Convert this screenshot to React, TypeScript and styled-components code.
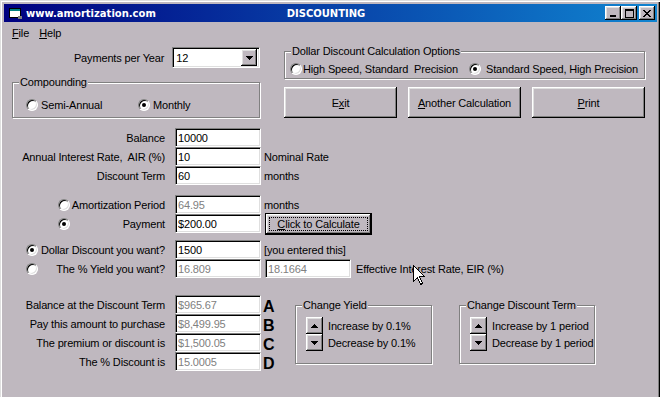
import styled, { createGlobalStyle } from "styled-components";

const GlobalStyle = createGlobalStyle`
  html, body {
    margin: 0;
    padding: 0;
    background: #ffffff;
    overflow: hidden;
  }
  body {
    font-family: "Liberation Sans", Arial, sans-serif;
    font-size: 11px;
    letter-spacing: -0.15px;
    color: #000;
  }
`;

const face = "#bfb8bf";
const raised =
  "inset -1px -1px #000, inset 1px 1px #fff, inset -2px -2px #808080, inset 2px 2px #dfdfdf";

const UpArrow = () => (
  <svg width="7" height="4" viewBox="0 0 7 4" shapeRendering="crispEdges">
    <path d="M3 0h1v1h1v1h1v1h1v1H0V3h1V2h1V1h1z" fill="#000" />
  </svg>
);

const DownArrow = () => (
  <svg width="7" height="4" viewBox="0 0 7 4" shapeRendering="crispEdges">
    <path d="M0 0h7v1H6v1H5v1H4v1H3V3H2V2H1V1H0z" fill="#000" />
  </svg>
);

const App = () => {
  return (
    <>
      <GlobalStyle />
      <Window>
        <TitleBar>
          <TitleLeft>
            <svg width="13" height="11" viewBox="0 0 13 11" shapeRendering="crispEdges">
              <rect x="0" y="0" width="12" height="10" fill="#000" />
              <rect x="1" y="1" width="10" height="2" fill="#008080" />
              <rect x="1" y="3" width="10" height="6" fill="#fff" />
              <rect x="9" y="8" width="4" height="3" fill="#808080" />
            </svg>
            www.amortization.com
          </TitleLeft>
          <TitleCenter>DISCOUNTING</TitleCenter>
          <CaptionGroup>
            <CaptionButton>
              <svg width="8" height="7" viewBox="0 0 8 7" shapeRendering="crispEdges">
                <rect x="1" y="5" width="6" height="2" fill="#000" />
              </svg>
            </CaptionButton>
            <CaptionButton>
              <svg width="9" height="9" viewBox="0 0 9 9" shapeRendering="crispEdges">
                <path d="M0 0h9v9H0z M1 2v6h7V2z" fill="#000" fillRule="evenodd" />
              </svg>
            </CaptionButton>
            <CaptionButton $gap>
              <svg width="8" height="7" viewBox="0 0 8 7" shapeRendering="crispEdges">
                <path
                  d="M0 0h2v1h1v1h2V1h1V0h2v1H7v1H6v1H5v1h1v1h1v1h1v1H6V6H5V5H3v1H2v1H0V6h1V5h1V4h1V3H2V2H1V1H0z"
                  fill="#000"
                />
              </svg>
            </CaptionButton>
          </CaptionGroup>
        </TitleBar>

        <MenuBar>
          <MenuItem>
            <u>F</u>ile
          </MenuItem>
          <MenuItem>
            <u>H</u>elp
          </MenuItem>
        </MenuBar>

        <Top>
          <LeftCol>
            <Row $mt={5} $h={21}>
              <Label>
                <LabelText>Payments per Year</LabelText>
              </Label>
              <Combo>
                <ComboText>12</ComboText>
                <DropButton>
                  <DownArrow />
                </DropButton>
              </Combo>
            </Row>
            <Group $w={248} $ml={12} $mt={8}>
              <Legend>Compounding</Legend>
              <OptionRow $pt={9} $pb={4} $pl={13}>
                <Option $w={112}>
                  <Radio />
                  Semi-Annual
                </Option>
                <Option>
                  <Radio $checked />
                  Monthly
                </Option>
              </OptionRow>
            </Group>
          </LeftCol>

          <RightCol>
            <Group $w={361} $mt={3}>
              <Legend>Dollar Discount Calculation Options</Legend>
              <OptionRow $pt={4} $pb={1} $pl={5}>
                <Option $w={179} $gap={1}>
                  <Radio />
                  {"High Speed, Standard  Precision"}
                </Option>
                <Option $gap={5}>
                  <Radio $checked />
                  Standard Speed, High Precision
                </Option>
              </OptionRow>
            </Group>
            <ButtonRow>
              <Button>
                E<u>x</u>it
              </Button>
              <Button>
                <u>A</u>nother Calculation
              </Button>
              <Button>
                <u>P</u>rint
              </Button>
            </ButtonRow>
          </RightCol>
        </Top>

        <Form>
          <Row $mt={10}>
            <Label>
              <LabelText>Balance</LabelText>
            </Label>
            <Field value="10000" readOnly />
          </Row>
          <Row>
            <Label>
              <LabelText>{"Annual Interest Rate,  AIR (%)"}</LabelText>
            </Label>
            <Field value="10" readOnly />
            <Note>Nominal Rate</Note>
          </Row>
          <Row>
            <Label>
              <LabelText>Discount Term</LabelText>
            </Label>
            <Field value="60" readOnly />
            <Note>months</Note>
          </Row>

          <Row $mt={10}>
            <Label $radioAt={58}>
              <Radio />
              <LabelText>Amortization Period</LabelText>
            </Label>
            <Field $dim value="64.95" readOnly />
            <Note>months</Note>
          </Row>
          <Row>
            <Label $radioAt={58}>
              <Radio $checked />
              <LabelText>Payment</LabelText>
            </Label>
            <Field value="$200.00" readOnly />
            <CalcButton>
              <FocusRing>
                <u>C</u>lick to Calculate
              </FocusRing>
            </CalcButton>
          </Row>

          <Row $mt={7}>
            <Label $radioAt={26}>
              <Radio $checked />
              <LabelText>Dollar Discount you want?</LabelText>
            </Label>
            <Field value="1500" readOnly />
            <Note>[you entered this]</Note>
          </Row>
          <Row>
            <Label $radioAt={26}>
              <Radio />
              <LabelText>The % Yield you want?</LabelText>
            </Label>
            <Field $dim value="16.809" readOnly />
            <Field $dim $ml={4} value="18.1664" readOnly />
            <Note $ml={5}>Effective Interest Rate, EIR (%)</Note>
          </Row>
        </Form>

        <Bottom>
          <Results>
            <Row>
              <Label>
                <LabelText>Balance at the Discount Term</LabelText>
              </Label>
              <Field $dim value="$965.67" readOnly />
              <Letter>A</Letter>
            </Row>
            <Row>
              <Label>
                <LabelText>Pay this amount to purchase</LabelText>
              </Label>
              <Field $dim value="$8,499.95" readOnly />
              <Letter>B</Letter>
            </Row>
            <Row>
              <Label>
                <LabelText>The premium or discount is</LabelText>
              </Label>
              <Field $dim value="$1,500.05" readOnly />
              <Letter>C</Letter>
            </Row>
            <Row>
              <Label>
                <LabelText>The % Discount is</LabelText>
              </Label>
              <Field $dim value="15.0005" readOnly />
              <Letter>D</Letter>
            </Row>
          </Results>

          <Group $w={137} $ml={15} $mt={4}>
            <Legend>Change Yield</Legend>
            <SpinList>
              <SpinRow>
                <SpinButton>
                  <UpArrow />
                </SpinButton>
                Increase by 0.1%
              </SpinRow>
              <SpinRow>
                <SpinButton>
                  <DownArrow />
                </SpinButton>
                Decrease by 0.1%
              </SpinRow>
            </SpinList>
          </Group>

          <Group $w={136} $ml={27} $mt={4}>
            <Legend>Change Discount Term</Legend>
            <SpinList>
              <SpinRow>
                <SpinButton>
                  <UpArrow />
                </SpinButton>
                Increase by 1 period
              </SpinRow>
              <SpinRow>
                <SpinButton>
                  <DownArrow />
                </SpinButton>
                Decrease by 1 period
              </SpinRow>
            </SpinList>
          </Group>
        </Bottom>

        <Cursor width="13" height="20" viewBox="0 0 13 20" shapeRendering="crispEdges">
          <path
            d="M0.5 0.5 V16.5 L4.5 12.5 L7.5 19.5 L9.5 18.5 L6.5 11.5 H11.5 Z"
            fill="#fff"
            stroke="#000"
            strokeWidth="1"
          />
        </Cursor>
      </Window>
    </>
  );
};

export default App;

const Window = styled.div`
  position: relative;
  width: 660px;
  height: 400px;
  background: ${face};
  box-shadow: inset 1px 1px #dfdfdf, inset 2px 2px #fff, inset -1px 0 #000,
    inset -2px 0 #808080;
  display: flex;
  flex-direction: column;
`;

// title bar with gradient
const TitleBar = styled.div`
  margin: 4px 3px 0 4px;
  height: 18px;
  padding: 0 2px 0 5px;
  background: linear-gradient(90deg, #000080, #1084d0);
  display: grid;
  grid-template-columns: 1fr auto 1fr;
  align-items: center;
  color: #fff;
  font-family: "DejaVu Sans", Verdana, sans-serif;
  font-weight: bold;
  font-size: 10px;
  letter-spacing: 0;
`;

const TitleLeft = styled.div`
  display: flex;
  align-items: center;
  gap: 4px;
  white-space: nowrap;
`;

const TitleCenter = styled.div`
  margin-right: 12px;
`;

const CaptionGroup = styled.div`
  justify-self: end;
  display: flex;
`;

const CaptionButton = styled.div<{ $gap?: boolean }>`
  width: 16px;
  height: 14px;
  margin-left: ${(p) => (p.$gap ? 2 : 0)}px;
  background: ${face};
  box-shadow: ${raised};
  display: grid;
  place-items: center;
  padding-top: 1px;
  box-sizing: border-box;
`;

const MenuBar = styled.div`
  display: flex;
  height: 18px;
  line-height: 18px;
  margin-top: 2px;
  padding-left: 7px;
`;

const MenuItem = styled.span`
  padding: 0 5px;
`;

const Top = styled.div`
  display: flex;
  align-items: flex-start;
`;

const LeftCol = styled.div`
  width: 260px;
  display: flex;
  flex-direction: column;
`;

const RightCol = styled.div`
  margin-left: 24px;
  width: 361px;
  display: flex;
  flex-direction: column;
`;

const Row = styled.div<{ $mt?: number; $h?: number }>`
  display: flex;
  align-items: center;
  height: ${(p) => p.$h ?? 19}px;
  margin-top: ${(p) => p.$mt ?? 0}px;
  white-space: pre;
`;

const Label = styled.div<{ $radioAt?: number }>`
  width: 165px;
  box-sizing: border-box;
  padding-left: ${(p) => p.$radioAt ?? 0}px;
  display: flex;
  align-items: center;
`;

const LabelText = styled.span`
  margin-left: auto;
  text-align: right;
`;

const Field = styled.input<{ $dim?: boolean; $ml?: number }>`
  box-sizing: border-box;
  width: 86px;
  height: 19px;
  margin: 0 0 0 ${(p) => p.$ml ?? 10}px;
  padding: 0 0 0 2px;
  border: 1px solid;
  border-color: #808080 #fff #fff #808080;
  box-shadow: inset 1px 1px #000, inset -1px -1px #dfdfdf;
  background: #fff;
  color: ${(p) => (p.$dim ? "#808080" : "#000")};
  font: inherit;
  letter-spacing: inherit;
  outline: none;
`;

const Note = styled.span<{ $ml?: number }>`
  margin-left: ${(p) => p.$ml ?? 3}px;
`;

const Combo = styled.div`
  box-sizing: border-box;
  width: 88px;
  height: 21px;
  margin-left: 8px;
  padding: 2px;
  border: 1px solid;
  border-color: #808080 #fff #fff #808080;
  box-shadow: inset 1px 1px #000, inset -1px -1px #dfdfdf;
  background: #fff;
  display: flex;
  align-items: center;
`;

const ComboText = styled.span`
  flex: 1;
  padding-left: 1px;
`;

const DropButton = styled.div`
  width: 16px;
  height: 17px;
  background: ${face};
  box-shadow: ${raised};
  display: grid;
  place-items: center;
`;

// group box (fieldset + legend)
const Group = styled.fieldset<{ $w: number; $ml?: number; $mt?: number }>`
  box-sizing: border-box;
  width: ${(p) => p.$w}px;
  min-width: 0;
  margin: ${(p) => p.$mt ?? 0}px 0 0 ${(p) => p.$ml ?? 0}px;
  padding: 0;
  border: 1px solid #808080;
  box-shadow: 1px 1px 0 #fff, inset 1px 1px 0 #fff;
`;

const Legend = styled.legend`
  margin-left: 6px;
  padding: 0 1px;
  line-height: 12px;
  background: ${face};
`;

const OptionRow = styled.div<{ $pt: number; $pb: number; $pl: number }>`
  display: flex;
  align-items: center;
  height: 16px;
  padding: ${(p) => `${p.$pt}px 0 ${p.$pb}px ${p.$pl}px`};
  white-space: pre;
`;

const Option = styled.div<{ $w?: number; $gap?: number }>`
  display: flex;
  align-items: center;
  gap: ${(p) => p.$gap ?? 3}px;
  width: ${(p) => (p.$w ? `${p.$w}px` : "auto")};
`;

const Radio = styled.span<{ $checked?: boolean }>`
  flex: none;
  width: 12px;
  height: 12px;
  box-sizing: border-box;
  border-radius: 50%;
  border: 1px solid;
  border-color: #808080 #fff #fff #808080;
  box-shadow: inset 1px 1px #000, inset -1px -1px #dfdfdf;
  background: #fff;
  display: grid;
  place-items: center;

  &::after {
    content: "";
    width: 4px;
    height: 4px;
    border-radius: 50%;
    background: ${(p) => (p.$checked ? "#000" : "transparent")};
  }
`;

const ButtonRow = styled.div`
  display: flex;
  gap: 11px;
  margin-top: 8px;
`;

const Button = styled.button`
  width: 113px;
  height: 31px;
  padding: 0;
  border: none;
  background: ${face};
  box-shadow: ${raised};
  font: inherit;
  letter-spacing: inherit;
  color: #000;
`;

const CalcButton = styled.button`
  box-sizing: border-box;
  width: 107px;
  height: 22px;
  margin-left: 4px;
  padding: 3px;
  border: 1px solid #000;
  background: ${face};
  box-shadow: ${raised};
  font: inherit;
  letter-spacing: inherit;
  color: #000;
  flex: none;
`;

const FocusRing = styled.span`
  display: flex;
  align-items: center;
  justify-content: center;
  height: 100%;
  box-sizing: border-box;
  border: 1px dotted #000;
`;

const Form = styled.div`
  display: flex;
  flex-direction: column;
`;

const Bottom = styled.div`
  display: flex;
  align-items: flex-start;
  margin-top: 17px;
`;

const Results = styled.div`
  width: 280px;
  display: flex;
  flex-direction: column;
`;

const Letter = styled.span`
  margin-left: 2px;
  font-weight: bold;
  font-size: 16px;
  letter-spacing: 0;
  line-height: 19px;
  padding-top: 3px;
`;

const SpinList = styled.div`
  padding: 6px 0 12px 10px;
  display: flex;
  flex-direction: column;
`;

const SpinRow = styled.div`
  display: flex;
  align-items: center;
  gap: 5px;
  height: 17px;
  white-space: nowrap;
`;

const SpinButton = styled.div`
  width: 17px;
  height: 17px;
  background: ${face};
  box-shadow: ${raised};
  display: grid;
  place-items: center;
`;

// the mouse pointer captured in the screenshot
const Cursor = styled.svg`
  position: absolute;
  left: 413px;
  top: 265px;
`;
